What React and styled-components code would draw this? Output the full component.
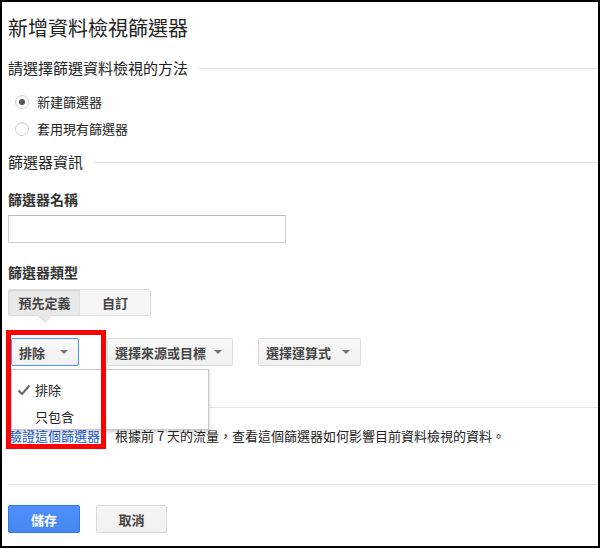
import React from "react";
import styled, { createGlobalStyle } from "styled-components";

const GlobalStyle = createGlobalStyle`
  html, body {
    margin: 0;
    padding: 0;
    background: #000;
  }
  body {
    font-family: "Noto Sans CJK TC", "Noto Sans", Arial, sans-serif;
    color: #222;
  }
`;

const Panel = styled.div`
  margin: 2px;
  height: 544px;
  box-sizing: border-box;
  background: #fff;
  padding: 12px 0 0 6px;
  overflow: hidden;
`;

const Title = styled.h1`
  margin: 0;
  font-size: 20px;
  line-height: 28px;
  font-weight: 400;
  color: #222;
`;

const Section = styled.div`
  display: flex;
  align-items: center;
  gap: 11px;
  margin-top: ${({ $top }) => $top}px;
  font-size: 15px;
  line-height: 20px;
  color: #222;

  &::after {
    content: "";
    flex: 1;
    border-top: 1px solid #e3e3e3;
  }
`;

const RadioList = styled.div`
  margin-top: 10px;
  padding-left: 7px;
`;

const RadioRow = styled.label`
  display: flex;
  align-items: center;
  height: 27px;
  gap: 8px;
  font-size: 13px;
  color: #222;
`;

const RadioDot = styled.span`
  width: 12px;
  height: 12px;
  border: 1px solid #cfcfcf;
  border-radius: 50%;
  display: flex;
  align-items: center;
  justify-content: center;
  background: #fff;
  box-shadow: inset 0 1px 1px rgba(0, 0, 0, 0.06);

  &::after {
    content: "";
    width: 6px;
    height: 6px;
    border-radius: 50%;
    background: ${({ $on }) => ($on ? "#555" : "transparent")};
  }
`;

const FieldLabel = styled.div`
  margin-top: ${({ $top }) => $top}px;
  font-size: 14px;
  line-height: 20px;
  font-weight: 700;
  color: #333;
`;

const TextInput = styled.input`
  display: block;
  margin-top: 6px;
  width: 278px;
  height: 28px;
  box-sizing: border-box;
  border: 1px solid #d0d0d0;
  border-top-color: #bbb;
  outline: none;
`;

const Tabs = styled.div`
  display: flex;
  margin-top: 7px;
  width: max-content;
  border: 1px solid #dcdcdc;
  border-radius: 2px;
`;

const Tab = styled.div`
  position: relative;
  width: ${({ $w }) => $w}px;
  height: 25px;
  display: flex;
  align-items: center;
  justify-content: center;
  font-size: 13px;
  font-weight: 700;
  color: #444;
  background: ${({ $active }) => ($active ? "#e9e9e9" : "#f5f5f5")};
  box-shadow: ${({ $active }) => ($active ? "inset 0 1px 2px rgba(0,0,0,0.1)" : "none")};

  ${({ $active }) =>
    $active &&
    `
    &::before, &::after {
      content: "";
      position: absolute;
      left: 50%;
      transform: translateX(-50%);
      border-left: 7px solid transparent;
      border-right: 7px solid transparent;
    }
    &::before {
      top: 26px;
      border-top: 7px solid #dcdcdc;
    }
    &::after {
      top: 25px;
      border-top: 7px solid #e9e9e9;
    }
  `}
`;

const SelectRow = styled.div`
  position: relative;
  display: flex;
  margin-top: 22px;
  padding-left: 3px;
`;

const Select = styled.div`
  width: ${({ $w }) => $w}px;
  margin-right: ${({ $gap }) => $gap || 0}px;
  height: 28px;
  box-sizing: border-box;
  display: flex;
  align-items: center;
  justify-content: space-between;
  padding: 0 10px 0 7px;
  font-size: 13px;
  font-weight: 700;
  color: #444;
  background: linear-gradient(#f8f8f8, #f1f1f1);
  border: 1px solid ${({ $focus }) => ($focus ? "#4d90fe" : "#dcdcdc")};
  border-radius: 2px;
`;

const Caret = styled.span`
  width: 0;
  height: 0;
  border-left: 4px solid transparent;
  border-right: 4px solid transparent;
  border-top: 4px solid #777;
`;

const Menu = styled.div`
  position: absolute;
  left: 3px;
  top: 31px;
  width: 198px;
  height: 61px;
  box-sizing: border-box;
  padding-top: 6px;
  background: #fff;
  border: 1px solid #c8c8c8;
  box-shadow: 0 2px 4px rgba(0, 0, 0, 0.2);
  z-index: 2;
`;

const MenuItem = styled.div`
  display: flex;
  align-items: center;
  height: 27px;
  padding-left: 5px;
  font-size: 13px;
  color: #222;
`;

const CheckSlot = styled.span`
  width: 18px;
  display: flex;
  align-items: center;
`;

const Marker = styled.div`
  position: absolute;
  left: -2px;
  top: -8px;
  width: 100px;
  height: 119px;
  box-sizing: border-box;
  border: 5px solid #ff0000;
  z-index: 3;
`;

const Divider = styled.div`
  margin-top: ${({ $top }) => $top}px;
  border-top: 1px solid #e5e5e5;
`;

const Preview = styled.div`
  margin-top: 18px;
  padding-left: 1px;
  font-size: 13px;
  line-height: 20px;
  color: #222;
`;

const Link = styled.a`
  color: #15c;
  text-decoration: none;
  margin-right: 15px;
`;

const Actions = styled.div`
  display: flex;
  gap: 16px;
  margin-top: 20px;
`;

const Button = styled.button`
  width: ${({ $w }) => $w}px;
  height: 28px;
  font-family: inherit;
  font-size: 13px;
  font-weight: 700;
  border-radius: 2px;
  color: ${({ $primary }) => ($primary ? "#fff" : "#444")};
  background: ${({ $primary }) =>
    $primary ? "linear-gradient(#4d90fe, #4787ed)" : "linear-gradient(#f5f5f5, #f1f1f1)"};
  border: 1px solid ${({ $primary }) => ($primary ? "#3079ed" : "#d8d8d8")};
`;

const CheckIcon = () => (
  <svg width="14" height="12" viewBox="0 0 14 12">
    <path d="M1.5 6.5 L5 10 L12.5 1.5" fill="none" stroke="#666" strokeWidth="2" />
  </svg>
);

export default function App() {
  return (
    <>
      <GlobalStyle />
      <Panel>
        <Title>新增資料檢視篩選器</Title>
        <Section $top={16}>請選擇篩選資料檢視的方法</Section>
        <RadioList>
          <RadioRow>
            <RadioDot $on />
            新建篩選器
          </RadioRow>
          <RadioRow>
            <RadioDot />
            套用現有篩選器
          </RadioRow>
        </RadioList>
        <Section $top={10}>篩選器資訊</Section>
        <FieldLabel $top={17}>篩選器名稱</FieldLabel>
        <TextInput />
        <FieldLabel $top={19}>篩選器類型</FieldLabel>
        <Tabs>
          <Tab $w={71} $active>
            預先定義
          </Tab>
          <Tab $w={70}>自訂</Tab>
        </Tabs>
        <SelectRow>
          <Select $w={68} $gap={28} $focus>
            排除 <Caret />
          </Select>
          <Select $w={126} $gap={25}>
            選擇來源或目標 <Caret />
          </Select>
          <Select $w={103}>
            選擇運算式 <Caret />
          </Select>
          <Menu>
            <MenuItem>
              <CheckSlot>
                <CheckIcon />
              </CheckSlot>
              排除
            </MenuItem>
            <MenuItem>
              <CheckSlot />
              只包含
            </MenuItem>
          </Menu>
          <Marker />
        </SelectRow>
        <Divider $top={41} />
        <Preview>
          <Link href="#">驗證這個篩選器</Link>
          根據前 7 天的流量，查看這個篩選器如何影響目前資料檢視的資料。
        </Preview>
        <Divider $top={38} />
        <Actions>
          <Button $w={72} $primary>
            儲存
          </Button>
          <Button $w={71}>取消</Button>
        </Actions>
      </Panel>
    </>
  );
}
